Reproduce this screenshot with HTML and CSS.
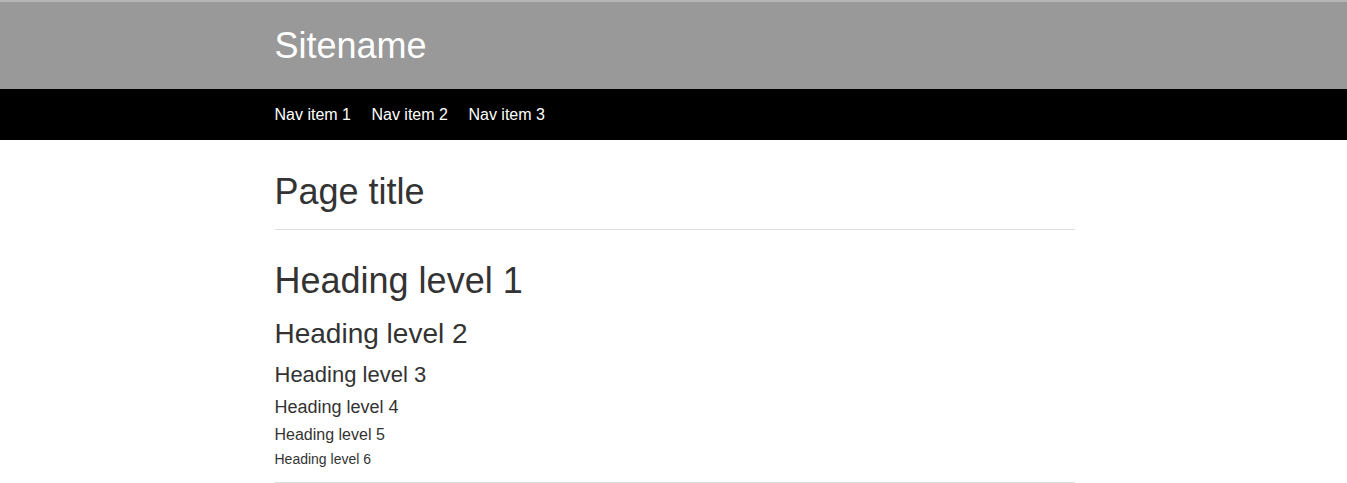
FILE: index.html
```html
<!DOCTYPE html>
<html lang="en">
<head>
  <meta charset="UTF-8">
  <title>Sitename</title>
  <meta name="viewport" content="width=device-width, initial-scale=1.0">
  <link rel="stylesheet" href="styles.css">
</head>
<body>
  <header class="site-header">
    <div class="container">
      <div class="sitename">Sitename</div>
    </div>
  </header>

  <nav class="site-nav">
    <div class="container">
      <a href="#">Nav item 1</a>
      <a href="#">Nav item 2</a>
      <a href="#">Nav item 3</a>
    </div>
  </nav>

  <main class="container">
    <div class="page-title">Page title</div>

    <h1>Heading level 1</h1>
    <h2>Heading level 2</h2>
    <h3>Heading level 3</h3>
    <h4>Heading level 4</h4>
    <h5>Heading level 5</h5>
    <h6>Heading level 6</h6>
    <hr>
  </main>
</body>
</html>
```

FILE: styles.css
```css
body {
  margin: 0;
  font-family: "Liberation Sans", Arial, sans-serif;
  color: #333;
  background: white;
}
.container {
  width: 800px;
  margin: 0 auto;
  padding-left: 2px;
}
.site-header {
  background: #999;
  border-top: 2px solid #b5b5b5;
  padding: 24px 0 23px;
}
.sitename {
  font-size: 36px;
  line-height: 40px;
  color: white;
}
.site-nav {
  background: black;
}
.site-nav .container {
  display: flex;
  gap: 20.5px;
}
.site-nav a {
  color: white;
  text-decoration: none;
  font-size: 16px;
  line-height: 51px;
}
.page-title {
  font-size: 36px;
  line-height: 40px;
  margin-top: 32px;
  padding-bottom: 17px;
  border-bottom: 1px solid #ddd;
}
h1, h2, h3, h4, h5, h6 {
  font-weight: normal;
  margin: 0;
}
h1 { font-size: 36px; line-height: 40px; margin-top: 31px; }
h2 { font-size: 28px; line-height: 31px; margin-top: 17px; }
h3 { font-size: 22px; line-height: 24px; margin-top: 14px; }
h4 { font-size: 18px; line-height: 20px; margin-top: 10px; }
h5 { font-size: 16px; line-height: 18px; margin-top: 9px; }
h6 { font-size: 14px; line-height: 16px; margin-top: 7px; }
hr {
  border: none;
  border-top: 1px solid #ddd;
  margin: 15px 0 0;
}
```
